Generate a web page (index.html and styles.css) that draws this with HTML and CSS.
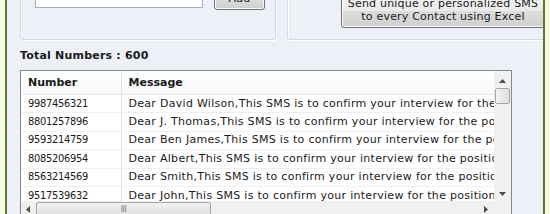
FILE: index.html
```html
<!DOCTYPE html>
<html lang="en">
<head>
<meta charset="UTF-8">
<title>Bulk SMS - Numbers</title>
<link rel="stylesheet" href="styles.css">
</head>
<body>
<div class="window">
  <div class="top-row">
    <div class="group group-import">
      <input class="number-input" type="text">
      <button type="button" class="btn btn-add">Add</button>
    </div>
    <div class="group group-excel">
      <button type="button" class="btn btn-excel">Send unique or personalized SMS<br>to every Contact using Excel</button>
    </div>
  </div>
  <div class="total">Total Numbers : 600</div>
  <div class="grid">
    <div class="grid-body">
      <table class="sms-table">
        <colgroup>
          <col class="col-number">
          <col class="col-message">
        </colgroup>
        <thead>
          <tr><th>Number</th><th>Message</th></tr>
        </thead>
        <tbody>
          <tr><td class="num">9987456321</td><td>Dear David Wilson,This SMS is to confirm your interview for the post of Sales Executive</td></tr>
          <tr><td class="num">8801257896</td><td>Dear J. Thomas,This SMS is to confirm your interview for the post of Sales Executive</td></tr>
          <tr><td class="num">9593214759</td><td>Dear Ben James,This SMS is to confirm your interview for the post of Sales Executive</td></tr>
          <tr><td class="num">8085206954</td><td>Dear Albert,This SMS is to confirm your interview for the position of Sales Executive</td></tr>
          <tr><td class="num">8563214569</td><td>Dear Smith,This SMS is to confirm your interview for the position of Sales Executive</td></tr>
          <tr><td class="num">9517539632</td><td>Dear John,This SMS is to confirm your interview for the position of Sales Executive</td></tr>
        </tbody>
      </table>
    </div>
    <div class="vscroll">
      <svg class="arrow arrow-up" viewBox="0 0 7 4"><path d="M0 4 L3.5 0 L7 4 Z" fill="#4d4d4d"/></svg>
      <div class="vthumb"></div>
      <div class="vtrack"></div>
      <svg class="arrow arrow-down" viewBox="0 0 7 4"><path d="M0 0 L3.5 4 L7 0 Z" fill="#4d4d4d"/></svg>
    </div>
    <div class="hscroll">
      <svg class="arrow arrow-left" viewBox="0 0 4 7"><path d="M4 0 L0 3.5 L4 7 Z" fill="#4d4d4d"/></svg>
      <div class="hthumb"><span class="grip">III</span></div>
      <div class="htrack"></div>
      <svg class="arrow arrow-right" viewBox="0 0 4 7"><path d="M0 0 L4 3.5 L0 7 Z" fill="#4d4d4d"/></svg>
    </div>
    <div class="corner"></div>
  </div>
</div>
</body>
</html>
```

FILE: styles.css
```css
body {
  margin: 0;
  background-color: #f8f8e4;
  font-family: "DejaVu Sans", Verdana, sans-serif;
  font-size: 11px;
  letter-spacing: 0.29px;
  color: #1a1a1a;
}

.window {
  margin-left: 5px;
  width: 536px;
  height: 214px;
  border-left: 2px solid #5b7a2a;
  border-right: 2px solid #5b7a2a;
  background-color: #eef0f8;
  overflow: hidden;
}

.top-row {
  display: flex;
  gap: 11px;
  margin-top: -30px;
  padding-left: 13px;
}

.group {
  height: 70px;
  box-sizing: border-box;
  flex-shrink: 0;
  border: 1px solid #d3d8e2;
  border-radius: 3px;
  box-shadow: inset 1px 1px 0 #fff, 1px 1px 0 #fff;
}

.group-import {
  width: 256px;
  display: flex;
  align-items: flex-start;
  gap: 11px;
  padding: 15px 0 0 14px;
}

.group-excel {
  width: 280px;
  padding: 22px 0 0 53px;
}

.number-input {
  width: 168px;
  height: 22px;
  box-sizing: border-box;
  margin: 0;
  padding: 0;
  border: 1px solid #abadb3;
  background-color: #fff;
}

.btn {
  margin: 0;
  box-sizing: border-box;
  border: 1px solid #707070;
  border-radius: 3px;
  background: linear-gradient(#f2f2f2 0%, #ebebeb 50%, #dddddd 51%, #cfcfcf 100%);
  font-family: inherit;
  font-size: 11px;
  letter-spacing: 0.2px;
  color: #1a1a1a;
  box-shadow: inset 0 0 0 1px #fbfbfb;
}

.btn-add {
  width: 51px;
  height: 24px;
}

.btn-excel {
  width: 204px;
  padding: 4px 0;
  line-height: 12.5px;
  white-space: nowrap;
}

.total {
  margin-top: 9px;
  padding-left: 13px;
  line-height: 14px;
  font-weight: bold;
  letter-spacing: 0.2px;
}

.grid {
  margin: 7px 0 0 13px;
  width: 492px;
  height: 149px;
  box-sizing: border-box;
  border: 1px solid #828790;
  background-color: #fff;
  display: grid;
  grid-template-columns: 473px 17px;
  grid-template-rows: 130px 17px;
}

.grid-body {
  overflow: hidden;
}

.sms-table {
  table-layout: fixed;
  border-collapse: collapse;
  width: 720px;
}

.col-number {
  width: 100px;
}

.sms-table th,
.sms-table td {
  padding: 0 0 0 7px;
  text-align: left;
  white-space: nowrap;
  overflow: hidden;
}

.sms-table th {
  height: 23px;
  font-weight: bold;
  letter-spacing: 0;
  background: linear-gradient(#ffffff, #f7f8fa);
  border-bottom: 1px solid #e5e5e5;
}

.sms-table td {
  height: 17.4px;
  line-height: 16px;
  border-bottom: 1px solid #f0f0f0;
}

.sms-table .num {
  font-family: "DejaVu Sans Condensed", "DejaVu Sans", sans-serif;
  letter-spacing: -0.3px;
}

.sms-table th:first-child,
.sms-table td:first-child {
  border-right: 1px solid #e2e2e2;
}

.vscroll {
  display: flex;
  flex-direction: column;
  align-items: center;
  background-color: #f0f0f0;
}

.vthumb {
  width: 15px;
  height: 16px;
  box-sizing: border-box;
  border: 1px solid #a6a6a6;
  border-radius: 2px;
  background: linear-gradient(to right, #f2f2f2, #dedede);
}

.vtrack {
  flex: 1;
}

.arrow-up,
.arrow-down {
  width: 7px;
  height: 4px;
  margin: 8px 0 5px;
}

.hscroll {
  display: flex;
  align-items: center;
  background-color: #f0f0f0;
}

.arrow-left,
.arrow-right {
  width: 4px;
  height: 7px;
  margin: 0 6px 0 5px;
}

.hthumb {
  width: 175px;
  height: 15px;
  box-sizing: border-box;
  border: 1px solid #a6a6a6;
  border-radius: 2px;
  background: linear-gradient(#f2f2f2, #dedede);
  display: flex;
  justify-content: center;
  align-items: center;
}

.grip {
  font-size: 8px;
  letter-spacing: -0.5px;
  color: #777;
}

.htrack {
  flex: 1;
}

.corner {
  background-color: #f0f0f0;
}
```
